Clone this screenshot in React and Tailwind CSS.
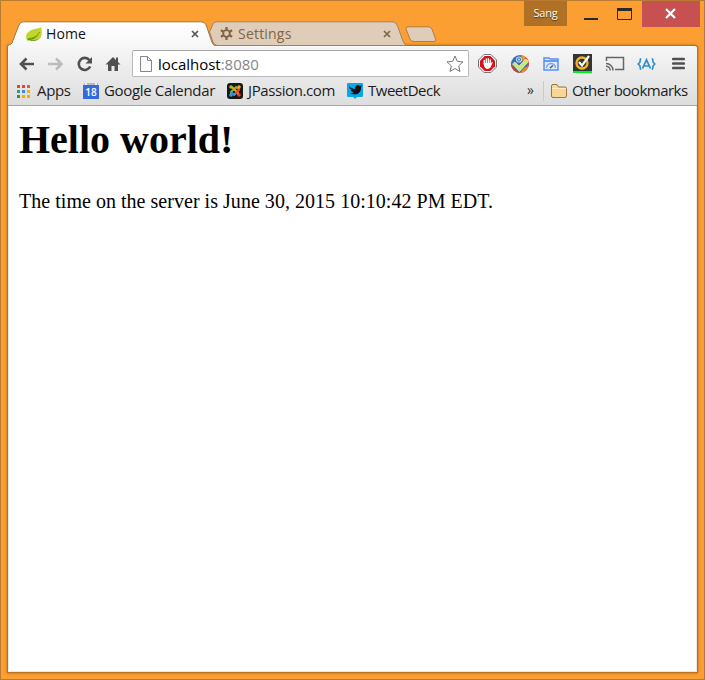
import React from "react";

const ui = "font-['Open_Sans','Noto_Sans',sans-serif] whitespace-nowrap";

function Icon({ w = 16, h = 16, vb, className = "", children }) {
  return (
    <svg width={w} height={h} viewBox={vb || `0 0 ${w} ${h}`} fill="none" className={`block shrink-0 ${className}`}>
      {children}
    </svg>
  );
}

function Close({ color = "#555" }) {
  return (
    <Icon w={8} h={8}>
      <path d="M1 1l6 6M7 1L1 7" stroke={color} strokeWidth="1.7" />
    </Icon>
  );
}

function Leaf() {
  return (
    <Icon>
      <path d="M15 1C12 3 7 2.500 3 5.500C-.5 8-.5 12 1 14C7 16 13 14.500 15 11C16 8 16 4 15 1Z" fill="#c3d52b" />
      <path d="M0 14C5 14.500 11 13 13.500 7C12 11 7 12 1 13C4 16 11 15.500 14 12.500C12 14 4 15 0 14Z" fill="#5c971c" />
      <path d="M2 12.900C7 12 11.500 10.500 13.500 6" stroke="#6ba020" strokeWidth="1" />
    </Icon>
  );
}

function Gear() {
  return (
    <Icon w={13} h={13}>
      <g stroke="#806546" strokeWidth="2.300">
        <path d="M6.500 0v3M6.500 10v3M.9 3.300l2.700 1.500M9.400 8.200l2.700 1.500M.9 9.700l2.700-1.500M9.400 4.800l2.700-1.500" />
        <circle cx="6.500" cy="6.500" r="3.300" strokeWidth="1.800" />
      </g>
    </Icon>
  );
}

function TitleBar() {
  return (
    <div className="flex h-[46px] items-start">
      <div className="relative z-10 mt-[21px] flex h-[25px] w-[204px] items-center pl-[18px]">
        <svg width="208" height="26" viewBox="0 0 208 26" className="absolute top-0 left-[-1px]">
          <defs>
            <linearGradient id="tab" x2="0" y2="1"><stop stopColor="#fff" /><stop offset="1" stopColor="#f7f7f7" /></linearGradient>
          </defs>
          <path d="M.5 26V25.500C.7 23.700 4 24 5 22L11.500 5Q13 .8 16 .8H194Q198 .8 199.500 5L204.500 20Q206 24.500 208 24.500V26Z" fill="url(#tab)" />
          <path d="M.5 26V25.500C.7 23.700 4 24 5 22L11.500 5Q13 .8 16 .8H194Q198 .8 199.500 5L204.500 20Q206 24.500 208 24.500" fill="none" stroke="#9e7545" />
        </svg>
        <div className="relative flex items-center"><Leaf /></div>
        <span className={`${ui} relative ml-1 text-[14px] leading-[22px] tracking-[0.1px] text-[#111]`}>Home</span>
        <div className="absolute top-[9px] left-[183px]"><Close /></div>
      </div>
      <div className="relative -ml-[3px] mt-[21px] flex h-[25px] w-[197px] items-center pl-[11px]">
        <svg width="198" height="25" viewBox="0 0 198 25" className="absolute top-0 left-0">
          <path d="M.5 11L4 3Q5 .8 8 .8H183Q187 .8 188.500 5L194 20Q195.500 24 197.500 24.500H8Q5 24 4 21Z" fill="#dfcdb9" stroke="#9e8261" />
        </svg>
        <div className="relative"><Gear /></div>
        <span className={`${ui} relative ml-[5px] text-[14px] leading-[22px] tracking-[0.2px] text-[#806546]`}>Settings</span>
        <div className="absolute top-[9px] left-[174px]"><Close color="#806546" /></div>
      </div>
      <Icon w={32} h={18} className="mt-[26px] -ml-[1px]">
        <path d="M1 3Q0 .8 3 .8H23Q26 .8 27 3L30.500 13Q31.500 15.500 29 15.500H9Q6 15.500 5 13Z" fill="#dfcdb9" stroke="#b77b36" />
      </Icon>
      <div className="ml-auto flex h-[27px]">
        <div className="mt-px flex h-[25px] w-[43px] items-center justify-center bg-[#b07025]">
          <span className={`${ui} text-[11px] tracking-[-0.2px] text-white [text-shadow:0_1px_1px_#553000]`}>Sang</span>
        </div>
        <Icon w={75} h={26} className="mt-px">
          <path d="M17 18h14" stroke="#2b2925" strokeWidth="2" />
          <path d="M50.500 8v10.500h14V8" stroke="#2b2925" />
          <path d="M50 8.500h15" stroke="#2b2925" strokeWidth="3" />
        </Icon>
        <Icon w={58} h={26} className="mt-px bg-[#c75050]">
          <path d="M24 8l9 9M33 8l-9 9" stroke="#fff" strokeWidth="2.200" />
        </Icon>
      </div>
    </div>
  );
}

function Navigation() {
  return (
    <div className="flex h-[33px] items-center pl-[11px]">
      <Icon><path d="M15 8H2M7.500 2.500L2 8l5.500 5.500" stroke="#505050" strokeWidth="2.600" /></Icon>
      <Icon className="ml-[13px]"><path d="M0 8h13M8 2.500L13.500 8 8 13.500" stroke="#bcbcbc" strokeWidth="2.600" /></Icon>
      <Icon className="ml-[13px]">
        <path d="M13.200 10.500a6 6 0 1 1-.7-6.300" stroke="#505050" strokeWidth="2.600" />
        <path d="M15 1v6.500H8.500Z" fill="#505050" />
      </Icon>
      <Icon className="ml-[12px]"><path d="M.5 8.500L8 1l3 3V1.500h2V6l2.500 2.500H13V15H9.500v-5h-3v5H3V8.500Z" fill="#505050" /></Icon>
      <div className="ml-[11px] flex h-[27px] w-[337px] items-center rounded-[2px] border border-[#bababa] border-t-[#a5a5a5] bg-white pr-[4px] pl-[7px]">
        <Icon w={12} h={16}>
          <path d="M.5 .5h7l4 4v11H.5ZM7.500 .5v4h4" stroke="#858585" fill="#fafafa" />
        </Icon>
        <span className={`${ui} ml-[6px] text-[15px] leading-6 tracking-[-0.02px] text-black`}>localhost<span className="text-[#858585]">:8080</span></span>
        <Icon w={18} h={18} className="ml-auto"><path d="M9 1l2.300 5.400 5.700.5-4.300 3.900L14 16.500 9 13.500l-5 3 1.300-5.700L1 6.900l5.700-.5Z" stroke="#777" fill="#fff" /></Icon>
      </div>
      <Icon w={19} h={19} className="ml-[9px]">
        <path d="M6 .5h7L18.500 6v7L13 18.500H6L.5 13V6Z" fill="#fff" stroke="#777" />
        <path d="M6.700 2h5.600L17 6.700v5.600L12.300 17H6.700L2 12.300V6.700Z" fill="#d8121c" />
        <path d="M6.300 10V6.500M8.300 9V5M10.300 9V4.700M12.200 9V6" stroke="#fff" strokeWidth="1.400" strokeLinecap="round" />
        <path d="M5.700 9h7.200l1.300-1 .5.600-2.200 5Q11.500 15 9 15 5.700 14 5.700 9Z" fill="#fff" />
      </Icon>
      <Icon w={20} h={20} className="ml-[13px]">
        <circle cx="10" cy="10" r="9" fill="#376eaf" />
        <path d="M11 1a9 9 0 0 1 8 10L13 8Z" fill="#ef972c" />
        <path d="M15 3a9 9 0 0 1 4 8l-2 1Z" fill="#df4836" />
        <path d="M1 9l3 4 6 6a9 9 0 0 1-9-10Z" fill="#b94d42" />
        <path d="M10 19l4-5 4-2c-1 5-4 7-8 7Z" fill="#e98b30" />
        <circle cx="9" cy="5.500" r="2.500" stroke="#b9d9fa" strokeWidth="1.200" />
        <circle cx="9" cy="5.500" r="1" fill="#d5e9ff" />
        <path d="M2.500 10l2.500-2 4 4 7-7 2.500 2.500-9 10Z" fill="#cce878" stroke="#f3ffd5" strokeWidth=".6" />
      </Icon>
      <Icon w={16} h={16} className="ml-[13px]">
        <path d="M1 4V2h5l1.500 1H15v11H1Z" fill="#dfe9fd" stroke="#5a91ef" strokeWidth="1.500" />
        <path d="M1 5h14" stroke="#5a91ef" strokeWidth="1.800" />
        <path d="M3.500 12a4.500 4.500 0 0 1 9 0" stroke="#78a5f3" strokeWidth="1.400" /><path d="M7 12l3-2.500" stroke="#555" strokeWidth="1.500" />
      </Icon>
      <Icon w={19} h={19} className="ml-[14px]">
        <path d="M0 0h19v17H0Z" fill="#343434" /><path d="M0 17h19v2H0Z" fill="#00f01c" />
        <circle cx="9" cy="9" r="5.500" stroke="#f5b51c" strokeWidth="2.300" />
        <path d="M6 8l3 3.500L16 2" stroke="#fff" strokeWidth="2.200" />
      </Icon>
      <Icon w={20} h={16} className="ml-[13px]">
        <path d="M1.500 5V1.500h17v12H10" stroke="#666" strokeWidth="1.500" />
        <path d="M1 7.500a7 7 0 0 1 7 7M1 10.200a4.300 4.300 0 0 1 4.300 4.300" stroke="#666" strokeWidth="1.500" /><path d="M1 12.500l2 2H1Z" fill="#666" />
      </Icon>
      <Icon w={19} h={16} className="ml-[12px]">
        <path d="M3.700 2.300Q3 4.500 3 6L1.200 8 3 10q0 1.500.7 3.700M15.300 2.300Q16 4.500 16 6l1.800 2L16 10q0 1.500-.7 3.700" stroke="#2d8dcc" strokeWidth="1.600" />
        <path d="M5.500 12.500L9.500 3.800l4 8.700M7.200 10h4.600" stroke="#2d8dcc" strokeWidth="1.700" />
      </Icon>
      <Icon w={13} h={15} className="ml-[16px]"><path d="M1.300 3h10.400M1.300 7.500h10.400M1.300 12h10.400" stroke="#505050" strokeWidth="2.700" strokeLinecap="round" /></Icon>
    </div>
  );
}

const appColors = ["#e94335", "#e94335", "#ed5535", "#34a162", "#4285f4", "#f4b400", "#28925a", "#f4a800", "#f4a800"];

function Bookmarks() {
  const label = `${ui} text-[15px] leading-5 text-[#1c1c1c] relative bottom-px`;
  return (
    <div className="flex h-[26px] items-center border-b border-[#a5a5a5] pb-[3px] pl-[9px]">
      <Icon w={13} h={13}>
        {appColors.map((c, i) => <rect key={i} x={(i % 3) * 5} y={Math.floor(i / 3) * 5} width="3" height="3" fill={c} />)}
      </Icon>
      <span className={`${label} ml-[7px] w-[46px] tracking-[-0.35px]`}>Apps</span>
      <Icon w={16} h={16}>
        <path d="M1 0h14v3H1Z" fill="#bbb" /><path d="M0 2h16v14H0Z" fill="#346adb" /><path d="M3 0v2M13 0v2" stroke="#eee" strokeWidth="2" />
        <text x="8" y="12.500" textAnchor="middle" fill="#fff" className="font-['Open_Sans',sans-serif] text-[10px] font-semibold">18</text>
      </Icon>
      <span className={`${label} ml-[5px] w-[123px] tracking-[-0.34px]`}>Google Calendar</span>
      <Icon w={16} h={16}>
        <rect width="16" height="16" rx="3" fill="#171717" />
        <path d="M4 11V9l5-5 2 2" stroke="#76bb32" strokeWidth="1.900" />
        <path d="M5 4l6 6v2" stroke="#f49e1e" strokeWidth="1.900" />
        <path d="M12 5v2l-5 5" stroke="#ee3d32" strokeWidth="1.900" />
        <path d="M4 9l3 3 2-2" stroke="#3399da" strokeWidth="1.900" />
        <circle cx="4" cy="4" r="1.800" fill="#8aca34" /><circle cx="12" cy="4" r="1.800" fill="#f7a51d" />
        <circle cx="4" cy="12" r="1.800" fill="#3398dc" /><circle cx="12" cy="12" r="1.800" fill="#ee392f" />
      </Icon>
      <span className={`${label} ml-[5px] w-[99px] tracking-[-0.4px]`}>JPassion.com</span>
      <Icon w={16} h={16}>
        <path d="M1 0h14q1 0 1 1v12q0 1-1 1h-5l-2 2-2-2H1q-1 0-1-1V1q0-1 1-1Z" fill="#08a8ed" />
        <path d="M2 3c2 2 4 3 6 3 0-4 3-5 5-3l2-1-1 2v1c0 6-6 8-11 5 2 0 3-.3 4-1-2 0-3-1-3-2h1C3 6 2 5 2 3Z" fill="#111" />
      </Icon>
      <span className={`${label} ml-[5px] tracking-[-0.48px]`}>TweetDeck</span>
      <div className="ml-auto flex items-center">
        <span className={`${ui} relative right-px bottom-px text-[14px] leading-5 text-[#333]`}>»</span>
        <div className="ml-[8px] h-5 w-px bg-[#c6cdd2]" />
        <Icon w={16} h={14} className="ml-[7px]">
          <path d="M.5 2Q.5 .5 2 .5h4L7.500 3H14q1.500 0 1.500 1.500V12q0 1.500-1.500 1.500H2Q.5 13.500.5 12Z" fill="#f8d795" stroke="#9e7640" />
          <path d="M1.500 4.500h13" stroke="#fff0c5" />
        </Icon>
        <span className={`${label} ml-[5px] w-[125px] tracking-[-0.5px]`}>Other bookmarks</span>
      </div>
    </div>
  );
}

export default function App() {
  return (
    <div className="flex h-[680px] w-[705px] flex-col overflow-hidden border border-[#b97b32] bg-[#fc9f32] px-[7px] pb-[7px]">
      <div className="-mt-px -mr-[3px]"><TitleBar /></div>
      <div className="flex min-h-0 flex-1 flex-col rounded-tr-[3px] bg-white shadow-[0_0_0_1px_#b87021,0_0_3px_1px_#a9661c]">
        <div className="h-[60px] shrink-0 rounded-tr-[3px] border-t border-[#fafafa] bg-linear-to-b from-[#f6f6f6] to-[#dddddd]">
          <Navigation />
          <Bookmarks />
        </div>
        <main className="flex-1 border-x border-b border-[#e5e8ec] pt-[11px] pl-[10px] font-['Liberation_Serif',serif] text-black">
          <h1 className="text-[40px] leading-[46px] font-bold">Hello world!</h1>
          <p className="mt-[27px] text-[20px] leading-[23px] tracking-[0.03px]">The time on the server is June 30, 2015 10:10:42 PM EDT.</p>
        </main>
      </div>
    </div>
  );
}
